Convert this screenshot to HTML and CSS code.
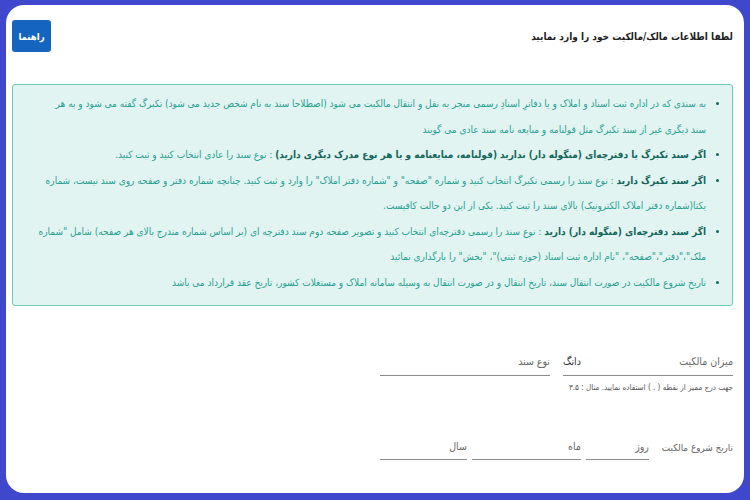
FILE: index.html
```html
<!DOCTYPE html>
<html lang="fa" dir="rtl">
<head>
<meta charset="utf-8">
<title>اطلاعات مالکیت</title>
<link rel="stylesheet" href="styles.css">
</head>
<body>
<div class="frame">
  <div class="card">
    <header class="head">
      <h1 class="title">لطفا اطلاعات مالک/مالکیت خود را وارد نمایید</h1>
      <button class="help-btn" type="button">راهنما</button>
    </header>

    <div class="info">
      <ul class="info-list">
        <li>به سندی که در اداره ثبت اسناد و املاک و یا دفاترِ اسنادِ رسمی منجر به نقل و انتقال مالکیت می شود (اصطلاحا سند به نام شخص جدید می شود) تکبرگ گفته می شود و به هر<br>سند دیگری غیر از سند تکبرگ مثل قولنامه و مبایعه نامه سند عادی می گویند</li>
        <li><b>اگر سند تکبرگ یا دفترچه‌ای (منگوله دار) ندارید (قولنامه، مبایعنامه و یا هر نوع مدرک دیگری دارید)</b> : نوع سند را عادی انتخاب کنید و ثبت کنید.</li>
        <li><b>اگر سند تکبرگ دارید</b> : نوع سند را رسمی تکبرگ انتخاب کنید و شماره "صفحه" و "شماره دفتر املاک" را وارد و ثبت کنید. چنانچه شماره دفتر و صفحه روی سند نیست، شماره<br>یکتا(شماره دفتر املاک الکترونیک) بالای سند را ثبت کنید. یکی از این دو حالت کافیست.</li>
        <li><b>اگر سند دفترچه‌ای (منگوله دار) دارید</b> : نوع سند را رسمی دفترچه‌ای انتخاب کنید و تصویر صفحه دوم سند دفترچه ای (بر اساس شماره مندرج بالای هر صفحه) شامل "شماره<br>ملک"،"دفتر"،"صفحه"، "نام اداره ثبت اسناد (حوزه ثبتی)"، "بخش" را بارگذاری نمائید</li>
        <li>تاریخ شروع مالکیت در صورت انتقال سند، تاریخ انتقال و در صورت انتقال به وسیله سامانه املاک و مستغلات کشور، تاریخ عقد قرارداد می باشد</li>
      </ul>
    </div>

    <div class="form">
      <div class="form-col">
        <div class="row-two">
          <div class="line tall">
            <span class="ph">میزان مالکیت</span>
            <span class="suffix">دانگ</span>
          </div>
          <div class="line tall">
            <span class="ph">نوع سند</span>
          </div>
        </div>
        <p class="hint">جهت درج ممیز از نقطه ( . ) استفاده نمایید. مثال : ۳.۵</p>

        <div class="row-date">
          <span class="date-label">تاریخ شروع مالکیت</span>
          <div class="line day"><span class="ph">روز</span></div>
          <div class="line month"><span class="ph">ماه</span></div>
          <div class="line year"><span class="ph">سال</span></div>
        </div>
      </div>
      <div class="form-col"></div>
    </div>
  </div>
</div>
</body>
</html>
```
FILE: styles.css
```css
* { box-sizing: border-box; }
html, body {
  margin: 0;
  padding: 0;
  height: 500px;
  overflow: hidden;
}
body {
  background: #3f48cc;
  font-family: "DejaVu Sans Condensed", "DejaVu Sans", sans-serif;
  font-stretch: condensed;
}
.frame {
  padding: 5px 6px 7px 6px;
  height: 500px;
}
.card {
  background: #ffffff;
  border-radius: 18px;
  height: 100%;
  padding: 15px 11px 0 6px;
}
.head {
  display: flex;
  justify-content: space-between;
  align-items: center;
  height: 32px;
}
.title {
  margin: 0;
  font-size: 10px;
  font-weight: bold;
  color: #222;
}
.help-btn {
  width: 39px;
  height: 32px;
  background: #1565c0;
  color: #fff;
  border: none;
  border-radius: 3px;
  font-family: inherit;
  font-size: 9.5px;
  font-weight: bold;
  padding: 0;
}
.info {
  margin-top: 32px;
  background: #e1f4f1;
  border: 1px solid #6ccab6;
  border-radius: 3px;
  padding: 6px 0 10px 5px;
}
.info-list {
  margin: 0;
  padding: 0 26px 0 0;
  color: #28a090;
  font-size: 10px;
  line-height: 25.5px;
}
.info-list li::marker { color: #13675d; }
.info-list b { color: #14665c; }
.form {
  display: grid;
  grid-template-columns: 353px 1fr;
  margin-top: 44px;
}
.row-two {
  display: grid;
  grid-template-columns: 1fr 1fr;
  gap: 13px;
}
.line {
  display: flex;
  justify-content: space-between;
  align-items: flex-end;
  border-bottom: 1.5px solid #8c8c8c;
  height: 26px;
  padding-bottom: 7px;
  font-size: 10.5px;
}
.line.tall { padding-bottom: 8px; }
.ph { color: #666; }
.suffix { color: #333; }
.hint {
  margin: 7px 0 0;
  font-size: 8px;
  color: #555;
}
.row-date {
  display: flex;
  align-items: flex-end;
  margin-top: 42px;
  gap: 5px;
}
.date-label {
  font-size: 9.8px;
  color: #666;
  padding-bottom: 7px;
  margin-left: 8px;
  white-space: nowrap;
}
.day { width: 63px; flex: none; }
.month { width: 109px; flex: none; }
.year { flex: 1; }
```
